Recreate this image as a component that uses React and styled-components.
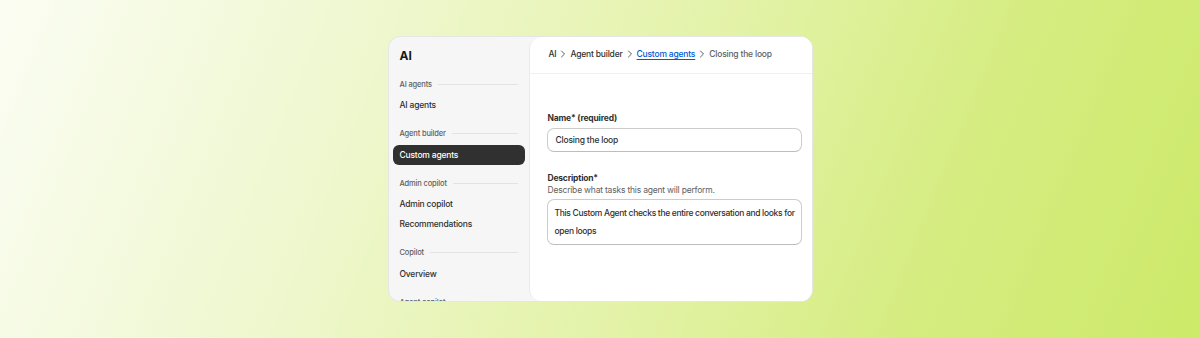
import React from "react";
import styled, { createGlobalStyle } from "styled-components";

const Global = createGlobalStyle`
  html, body { margin: 0; padding: 0; }
  body {
    font-family: Inter, "Noto Sans", sans-serif;
    -webkit-font-smoothing: antialiased;
  }
`;

const Page = styled.div`
  width: 1200px;
  height: 338px;
  display: flex;
  align-items: center;
  justify-content: center;
  background: linear-gradient(112deg, #fbfdf3 0%, #eef7cd 30%, #e2f2a4 58%, #d5ec80 78%, #cdea69 100%);
`;

const Card = styled.div`
  width: 425px;
  height: 266px;
  display: flex;
  background: #f6f6f6;
  border: 1px solid #e6e6e6;
  border-radius: 12px;
  overflow: hidden;
  box-sizing: border-box;
`;

const Sidebar = styled.nav`
  width: 140px;
  flex: none;
  padding: 10px 4px 0;
  box-sizing: border-box;
  display: flex;
  flex-direction: column;
`;

const Heading = styled.div`
  height: 18px;
  line-height: 18px;
  padding-left: 7px;
  font-size: 12px;
  font-weight: 650;
  color: #1a1a1a;
  margin-bottom: 8px;
`;

const Section = styled.div`
  display: flex;
  flex-direction: column;
  margin-bottom: 7.5px;
`;

const SectionLabel = styled.div`
  height: 22px;
  display: flex;
  align-items: center;
  gap: 6px;
  padding: 0 7px;
  font-size: 7.5px;
  letter-spacing: -0.15px;
  font-weight: 550;
  color: #616161;
  white-space: nowrap;
  &::after {
    content: "";
    flex: 1;
    height: 1px;
    background: #e3e3e3;
  }
`;

const Item = styled.div`
  height: 20px;
  display: flex;
  align-items: center;
  padding: 0 7px;
  border-radius: 6px;
  font-size: 8.5px;
  letter-spacing: -0.2px;
  font-weight: 500;
  white-space: nowrap;
  color: ${(p) => (p.$active ? "#ffffff" : "#303030")};
  background: ${(p) => (p.$active ? "#303030" : "transparent")};
`;

const Main = styled.main`
  flex: 1;
  min-width: 0;
  background: #ffffff;
  border-left: 1px solid #ebebeb;
  border-radius: 12px 0 0 12px;
  display: flex;
  flex-direction: column;
`;

const Header = styled.div`
  height: 37px;
  flex: none;
  box-sizing: border-box;
  padding: 0 0 3px 19px;
  display: flex;
  align-items: center;
  gap: 3px;
  border-bottom: 1px solid #f0f0f0;
  font-size: 8.5px;
  letter-spacing: -0.2px;
  font-weight: 500;
  color: #303030;
  white-space: nowrap;
`;

const Crumb = styled.span`
  flex: none;
  color: ${(p) => (p.$link ? "#005bd3" : p.$current ? "#616161" : "#303030")};
  text-decoration: ${(p) => (p.$link ? "underline" : "none")};
  text-underline-offset: 2px;
`;

const Form = styled.div`
  padding: 38px 10px 0 17px;
  display: flex;
  flex-direction: column;
`;

const Field = styled.div`
  display: flex;
  flex-direction: column;
  margin-bottom: ${(p) => p.$mb || 0}px;
`;

const Label = styled.div`
  font-size: 8.5px;
  letter-spacing: -0.2px;
  font-weight: 650;
  color: #303030;
  line-height: 12px;
  padding-left: 1px;
`;

const Help = styled.div`
  font-size: 8.5px;
  letter-spacing: -0.2px;
  color: #616161;
  line-height: 12px;
  padding-left: 1px;
  margin-bottom: 3px;
`;

const Input = styled.div`
  margin-top: ${(p) => p.$mt || 0}px;
  height: ${(p) => p.$h}px;
  box-sizing: border-box;
  border: 1px solid #cccccc;
  border-bottom-color: #bdbdbd;
  border-radius: 7px;
  padding: ${(p) => (p.$multi ? "4px 2px 4px 7px" : "0 8px")};
  display: flex;
  align-items: ${(p) => (p.$multi ? "flex-start" : "center")};
  font-size: 8.5px;
  letter-spacing: ${(p) => (p.$multi ? -0.32 : -0.2)}px;
  font-weight: 450;
  line-height: 18px;
  color: #303030;
`;

const Chevron = () => (
  <svg width="8" height="8" viewBox="0 0 8 8" fill="none">
    <path d="M2.5 1l3 3-3 3" stroke="#4a4a4a" strokeWidth="0.9" strokeLinecap="round" strokeLinejoin="round" />
  </svg>
);

const nav = [
  { label: "AI agents", items: ["AI agents"] },
  { label: "Agent builder", items: ["Custom agents"], active: "Custom agents" },
  { label: "Admin copilot", items: ["Admin copilot", "Recommendations"] },
  { label: "Copilot", items: ["Overview"] },
  { label: "Agent copilot", items: [] },
];

export default function App() {
  return (
    <>
      <Global />
      <Page>
        <Card>
          <Sidebar>
            <Heading>AI</Heading>
            {nav.map((s) => (
              <Section key={s.label}>
                <SectionLabel>{s.label}</SectionLabel>
                {s.items.map((it) => (
                  <Item key={it} $active={s.active === it}>
                    {it}
                  </Item>
                ))}
              </Section>
            ))}
          </Sidebar>
          <Main>
            <Header>
              <Crumb>AI</Crumb>
              <Chevron />
              <Crumb>Agent builder</Crumb>
              <Chevron />
              <Crumb $link>Custom agents</Crumb>
              <Chevron />
              <Crumb $current>Closing the loop</Crumb>
            </Header>
            <Form>
              <Field $mb={20}>
                <Label>Name* (required)</Label>
                <Input $mt={4} $h={24}>Closing the loop</Input>
              </Field>
              <Field>
                <Label>Description*</Label>
                <Help>Describe what tasks this agent will perform.</Help>
                <Input $multi $h={46}>
                  This Custom Agent checks the entire conversation and looks for open loops
                </Input>
              </Field>
            </Form>
          </Main>
        </Card>
      </Page>
    </>
  );
}
